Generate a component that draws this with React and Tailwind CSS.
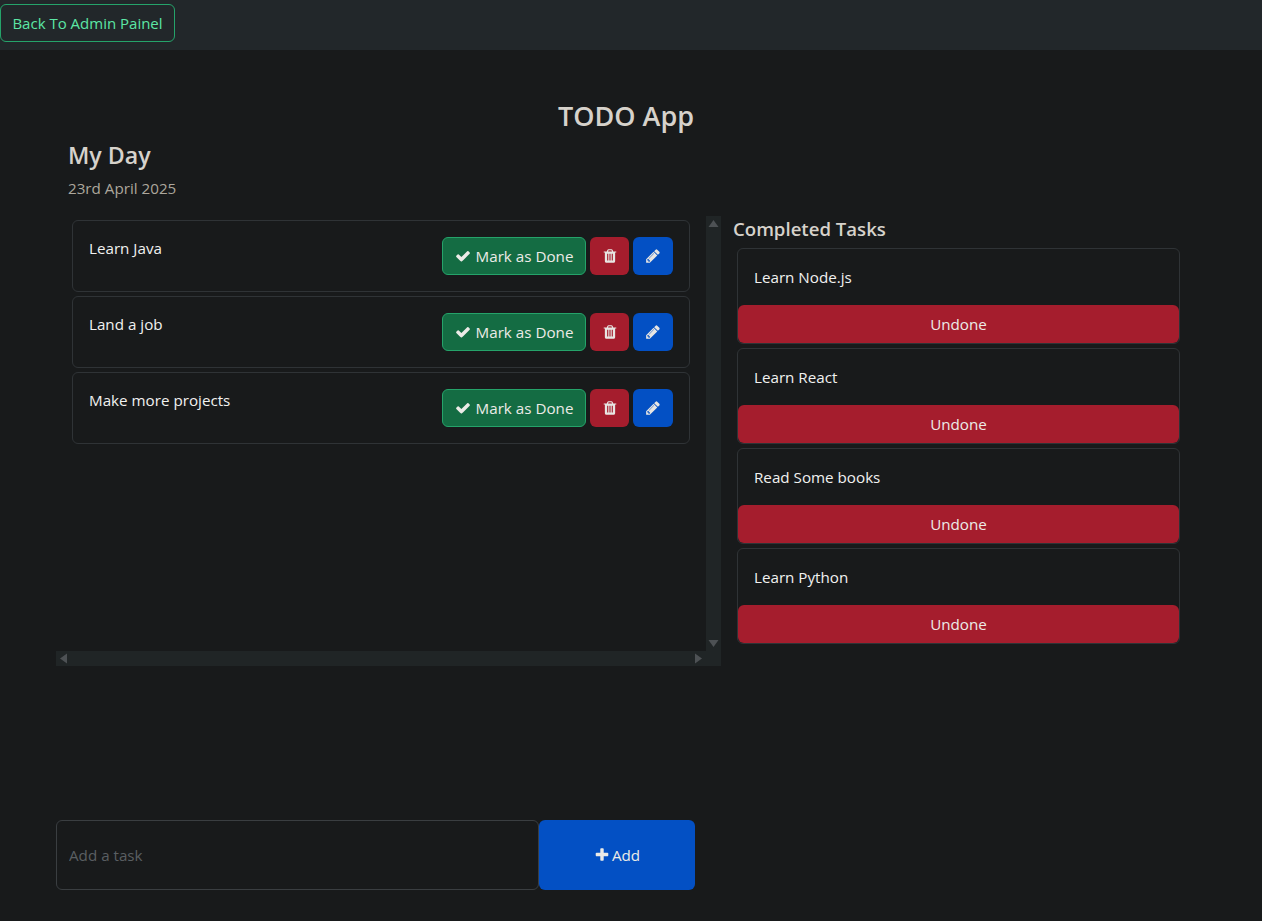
import React from "react";

const todos = ["Learn Java", "Land a job", "Make more projects"];
const completed = ["Learn Node.js", "Learn React", "Read Some books", "Learn Python"];

// font awesome 4 glyphs, the fa set in react-icons only has the newer shapes
const icons = {
  check:
    "M1671 566q0 40-28 68l-724 724-136 136q-28 28-68 28t-68-28l-136-136-362-362q-28-28-28-68t28-68l136-136q28-28 68-28t68 28l294 295 656-657q28-28 68-28t68 28l136 136q28 28 28 68z",
  trash:
    "M704 1376v-704q0-14-9-23t-23-9h-64q-14 0-23 9t-9 23v704q0 14 9 23t23 9h64q14 0 23-9t9-23zm256 0v-704q0-14-9-23t-23-9h-64q-14 0-23 9t-9 23v704q0 14 9 23t23 9h64q14 0 23-9t9-23zm256 0v-704q0-14-9-23t-23-9h-64q-14 0-23 9t-9 23v704q0 14 9 23t23 9h64q14 0 23-9t9-23zm-544-992h448l-48-117q-7-9-17-11h-317q-10 2-17 11zm928 32v64q0 14-9 23t-23 9h-96v948q0 83-47 143.5t-113 60.5h-832q-66 0-113-58.5t-47-141.5v-952h-96q-14 0-23-9t-9-23v-64q0-14 9-23t23-9h309l70-167q15-37 54-63t79-26h320q40 0 79 26t54 63l70 167h309q14 0 23 9t9 23z",
  pencil:
    "M491 1536l91-91-235-235-91 91v107h128v128h107zm523-928q0-22-22-22-10 0-17 7l-542 542q-7 7-7 17 0 22 22 22 10 0 17-7l542-542q7-7 7-17zm-54-192l416 416-832 832h-416v-416zm683 96q0 53-37 90l-166 166-416-416 166-165q36-38 90-38 53 0 91 38l235 234q37 39 37 91z",
  plus:
    "M1600 736v192q0 40-28 68t-68 28h-416v416q0 40-28 68t-68 28h-192q-40 0-68-28t-28-68v-416h-416q-40 0-68-28t-28-68v-192q0-40 28-68t68-28h416v-416q0-40 28-68t68-28h192q40 0 68 28t28 68v416h416q40 0 68 28t28 68z",
};

function Icon({ name }) {
  return (
    <svg width="16" height="16" viewBox="0 0 1792 1792" fill="currentColor">
      <path d={icons[name]} />
    </svg>
  );
}

function TodoCard({ title }) {
  return (
    <div className="h-[72px] w-[618px] rounded-md border border-[#2f3336] p-4 flex justify-between">
      <p className="text-[#f1f1f0] leading-6 -mt-[1px]">{title}</p>
      <div className="flex gap-1">
        <button className="h-[38px] w-[144px] rounded-md border border-[#25a36a] bg-[#146c43] text-[#ecebe7] flex items-center justify-center gap-[5px]">
          <Icon name="check" />
          Mark as Done
        </button>
        <button className="h-[38px] w-[39px] rounded-md bg-[#a51d2d] text-[#e8e6e3] flex items-center justify-center">
          <Icon name="trash" />
        </button>
        <button className="h-[38px] w-[40px] rounded-md bg-[#0350c4] text-[#e8e6e3] flex items-center justify-center">
          <Icon name="pencil" />
        </button>
      </div>
    </div>
  );
}

function DoneCard({ title }) {
  return (
    <div className="h-[96px] w-[443px] rounded-md border border-[#2f3336] flex flex-col justify-between">
      <p className="px-4 pt-[16px] text-[#f1f1f0] leading-6">{title}</p>
      <button className="h-[38px] rounded-md bg-[#a51d2d] text-[#ecebe7]">Undone</button>
    </div>
  );
}

function Arrow({ points }) {
  return (
    <svg width="11" height="11" viewBox="0 0 11 11" className="text-[#4d5154]">
      <polygon points={points} fill="currentColor" />
    </svg>
  );
}

export default function App() {
  return (
    <div className="min-h-[921px] bg-[#181a1b] font-['Open_Sans','Noto_Sans',sans-serif] text-[15.2px]">
      <nav className="h-[50px] bg-[#22272a] pt-1">
        <button className="h-[38px] w-[175px] rounded-md border border-[#25a36a] text-[#5ce6a5] text-[15px]">Back To Admin Painel</button>
      </nav>

      <h1 className="mt-[48px] pr-[10px] text-center text-[27px] leading-9 font-semibold text-[#d6d2cb]">TODO App</h1>

      <div className="pl-[68px]">
        <h2 className="mt-[5px] text-[23.2px] leading-8 font-semibold text-[#d6d2cb]">My Day</h2>
        <p className="mt-[5px] leading-6 text-[#aca79c]">23rd April 2025</p>
      </div>

      <div className="mt-[16px] ml-[56px] flex gap-[12px]">
        <div className="w-[665px] h-[450px] grid grid-cols-[650px_15px] grid-rows-[435px_15px]">
          <div className="pl-[16px] pt-[4px] flex flex-col gap-1">
            {todos.map((t) => (
              <TodoCard key={t} title={t} />
            ))}
          </div>
          <div className="bg-[#202526] flex flex-col items-center justify-between py-[2px]">
            <Arrow points="5.5,2 10.5,9 0.5,9" />
            <Arrow points="0.5,2 10.5,2 5.5,9" />
          </div>
          <div className="bg-[#202526] flex items-center justify-between px-[2px]">
            <Arrow points="9,0.5 9,10.5 2,5.5" />
            <Arrow points="2,0.5 2,10.5 9,5.5" />
          </div>
          <div className="bg-[#202526]"></div>
        </div>

        <div>
          <h3 className="mt-[1px] text-[18.6px] leading-6 font-semibold text-[#d6d2cb]">Completed Tasks</h3>
          <div className="mt-[7px] ml-[4px] flex flex-col gap-1">
            {completed.map((t) => (
              <DoneCard key={t} title={t} />
            ))}
          </div>
        </div>
      </div>

      <div className="mt-[154px] ml-[56px] flex h-[70px] w-[639px]">
        <input
          placeholder="Add a task"
          className="w-[483px] rounded-md border border-[#3a3e41] bg-[#181a1b] px-3 outline-none placeholder:text-[#5a5f62]"
        />
        <button className="w-[156px] rounded-md bg-[#0350c4] text-[#ecebe7] flex items-center justify-center gap-[2px]">
          <Icon name="plus" />
          Add
        </button>
      </div>
    </div>
  );
}
